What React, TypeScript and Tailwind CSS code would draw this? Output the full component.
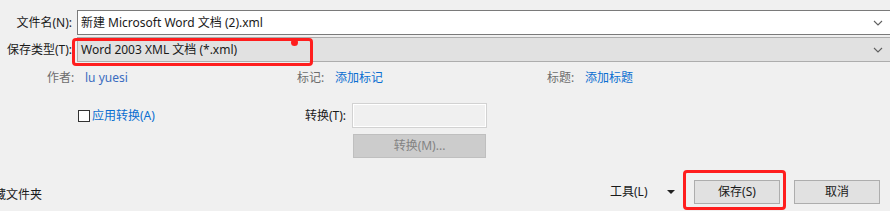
const font = {
  fontFamily: '"Noto Sans", "Noto Sans CJK SC", sans-serif',
};

function Chevron() {
  return (
    <svg width="10" height="6" viewBox="0 0 10 6" className="shrink-0">
      <path d="M1 1 L5 5 L9 1" fill="none" stroke="#606060" strokeWidth="1.1" />
    </svg>
  );
}

function MetaItem({ label, value, valueClass }: { label: string; value: string; valueClass: string }) {
  return (
    <div className="flex w-[250px] items-center">
      <span className="w-[38px] text-[#6d6d6d]">{label}</span>
      <span className={valueClass}>{value}</span>
    </div>
  );
}

export default function App() {
  return (
    <div
      style={font}
      className="relative h-[211px] w-[890px] overflow-hidden bg-[#f0f0f0] text-[12px] leading-none text-[#1a1a1a]"
    >
      <div className="flex flex-col pt-[10px]">
        {/* file name */}
        <div className="flex h-[25px] items-stretch">
          <span className="flex w-[72px] items-center justify-end">文件名(N):</span>
          <div className="ml-[5px] -mr-[4px] flex flex-1 items-center border border-[#7a7a7a] bg-white pl-[3px] pr-[10px]">
            <span className="flex-1">新建 Microsoft Word 文档 (2).xml</span>
            <Chevron />
          </div>
        </div>

        {/* save type */}
        <div className="mt-[2px] flex h-[25px] items-stretch">
          <span className="flex w-[72px] items-center justify-end">保存类型(T):</span>
          <div className="ml-[5px] -mr-[4px] flex flex-1 items-center border border-[#adadad] bg-[#e1e1e1] pl-[3px] pr-[10px]">
            <span className="flex-1">Word 2003 XML 文档 (*.xml)</span>
            <Chevron />
          </div>
        </div>

        {/* metadata */}
        <div className="mt-[7px] flex h-[18px] items-center pl-[47px]">
          <MetaItem label="作者:" value="lu yuesi" valueClass="text-[#3a6cc0]" />
          <MetaItem label="标记:" value="添加标记" valueClass="text-[#0a6ed1]" />
          <MetaItem label="标题:" value="添加标题" valueClass="text-[#0a6ed1]" />
        </div>

        {/* conversion */}
        <div className="mt-[16px] flex h-[25px] items-center">
          <span className="ml-[78px] h-[12px] w-[12px] border border-[#333333] bg-white" />
          <span className="ml-[2px] w-[213px] text-[#0a6ed1]">应用转换(A)</span>
          <span className="w-[47px]">转换(T):</span>
          <div className="h-[25px] w-[135px] border border-[#d2d2d2] bg-[#f0f0f0] shadow-[inset_0_0_0_1px_#ffffff]" />
        </div>
        <div className="mt-[6px] flex h-[24px] w-[133px] items-center justify-center ml-[353px] border border-[#bfbfbf] bg-[#cccccc] text-[#838383]">
          转换(M)...
        </div>

        {/* bottom */}
        <div className="mt-[22px] flex h-[24px] items-center">
          <span className="-ml-[18px] mt-[6px] w-[628px]">隐藏文件夹</span>
          <span className="w-[57px]">工具(L)</span>
          <svg width="8" height="4" viewBox="0 0 8 4" className="mr-[19px]">
            <path d="M0 0 L8 0 L4 4 Z" fill="#222222" />
          </svg>
          <div className="flex h-[24px] w-[86px] items-center justify-center border border-[#adadad] bg-[#e1e1e1]">
            保存(S)
          </div>
          <div className="ml-[14px] flex h-[24px] w-[86px] items-center justify-center border border-[#adadad] bg-[#e1e1e1]">
            取消
          </div>
        </div>
      </div>

      {/* annotations */}
      <div className="absolute left-[72px] top-[38px] h-[28px] w-[241px] rounded-[4px] border-[3px] border-[#ff1e1e]" />
      <div className="absolute left-[291px] top-[39px] h-[7px] w-[7px] rounded-full bg-[#ff1e1e]" />
      <div className="absolute left-[683px] top-[170px] h-[40px] w-[103px] rounded-[4px] border-[3px] border-[#ff1e1e]" />
    </div>
  );
}
